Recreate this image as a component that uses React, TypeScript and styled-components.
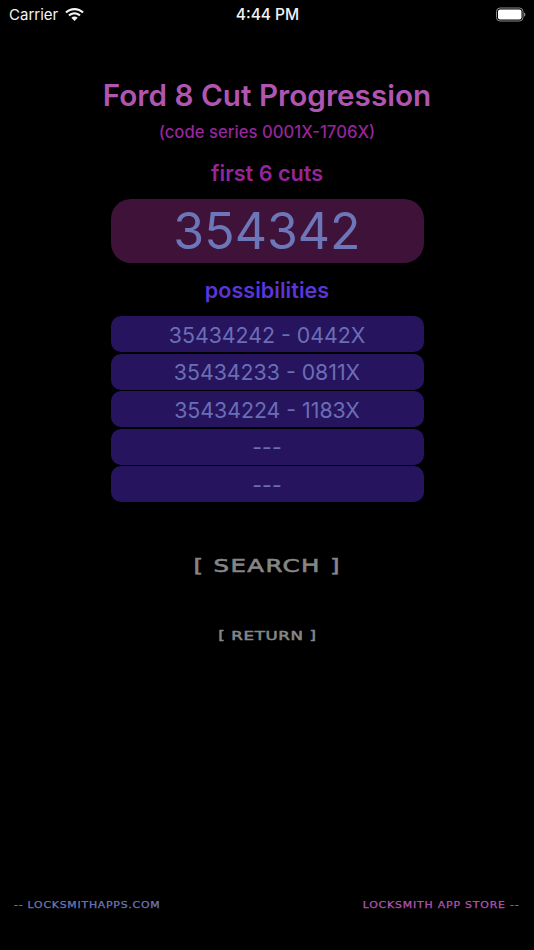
import React from 'react';
import styled, { createGlobalStyle } from 'styled-components';

const GlobalStyle = createGlobalStyle`
  html, body {
    margin: 0;
    padding: 0;
    background: #000;
  }
  body {
    font-family: Inter, "Liberation Sans", sans-serif;
  }
`;

const Screen = styled.div`
  width: 534px;
  height: 950px;
  background: #000;
  display: flex;
  flex-direction: column;
  overflow: hidden;
`;

const StatusBar = styled.div`
  height: 28px;
  display: grid;
  grid-template-columns: 1fr auto 1fr;
  align-items: center;
  padding: 0 8px 0 9px;
  color: #f4f4f4;
`;

const Carrier = styled.div`
  display: flex;
  align-items: center;
  gap: 7px;
  font-size: 15px;
  font-weight: 400;
`;

const Clock = styled.div`
  font-weight: 500;
  font-size: 15.500px;
`;

const BatteryWrap = styled.div`
  justify-self: end;
  display: flex;
`;

const Content = styled.div`
  flex: 1;
  display: flex;
  flex-direction: column;
  align-items: center;
  padding-top: 47px;
`;

const Title = styled.div`
  color: #b055b0;
  font-size: 29.700px;
  font-weight: 600;
  line-height: 40px;
`;

const Subtitle = styled.div`
  color: #96259a;
  font-size: 16.700px;
  font-weight: 500;
  line-height: 20px;
  margin-top: 7px;
`;

const SectionLabel = styled.div<{ $color: string }>`
  color: ${(props) => props.$color};
  font-size: 21.600px;
  font-weight: 600;
  line-height: 28px;
`;

const CutsLabel = styled(SectionLabel)`
  margin-top: 17px;
`;

const PossibilitiesLabel = styled(SectionLabel)`
  margin-top: 13px;
`;

const CutsBox = styled.div`
  width: 313px;
  height: 64px;
  margin-top: 12px;
  border-radius: 20px;
  background: #3e1239;
  color: #6d76b8;
  font-size: 50px;
  font-weight: 400;
  display: flex;
  align-items: center;
  justify-content: center;
`;

const RowList = styled.div`
  display: flex;
  flex-direction: column;
  gap: 1.500px;
  margin-top: 12px;
`;

const Row = styled.div`
  width: 313px;
  height: 36px;
  padding-top: 1px;
  box-sizing: border-box;
  border-radius: 10px;
  background: #26145f;
  color: #6a6eb6;
  font-size: 21.300px;
  font-weight: 400;
  display: flex;
  align-items: center;
  justify-content: center;
`;

const WideText = styled.div`
  font-family: "DejaVu Sans", sans-serif;
  font-weight: 400;
  white-space: nowrap;
`;

const WideButton = styled(WideText)<{ $size: number; $top: number; $stretch: number; $spacing: number }>`
  margin-top: ${(props) => props.$top}px;
  color: #868686;
  font-size: ${(props) => props.$size}px;
  letter-spacing: ${(props) => props.$spacing}px;
  line-height: 1.2;
  -webkit-text-stroke: 0.600px #868686;
  transform: scaleX(${(props) => props.$stretch});
`;

const Footer = styled.div`
  display: flex;
  justify-content: space-between;
  padding: 0 14px 38px;
`;

const FooterLink = styled(WideText)<{ $color: string; $origin: string; $spacing: number }>`
  color: ${(props) => props.$color};
  font-size: 8.500px;
  letter-spacing: ${(props) => props.$spacing}px;
  line-height: 14px;
  -webkit-text-stroke: 0.250px ${(props) => props.$color};
  transform: scaleX(1.28);
  transform-origin: ${(props) => props.$origin} center;
`;

const WifiIcon = () => (
  <svg width="19" height="15" viewBox="0.8 0.4 17.4 12.2">
    <path
      fill="#f4f4f4"
      d="M9.5 2.6c2.7 0 5.2 1 7.1 2.8l1.4-1.5C15.7 1.800 12.700.5 9.500.5S3.300 1.800 1 3.900l1.400 1.500C4.300 3.600 6.800 2.600 9.500 2.600zM9.500 6.500c1.600 0 3.100.6 4.300 1.700l1.400-1.500C13.700 5.300 11.700 4.400 9.500 4.400s-4.200.9-5.700 2.300l1.400 1.500C6.400 7.100 7.900 6.500 9.500 6.500zM9.500 8.300c-1.100 0-2.100.4-2.900 1.100l2.900 3.100 2.900-3.100C11.600 8.700 10.600 8.300 9.500 8.300z"
    />
  </svg>
);

const BatteryIcon = () => (
  <svg width="30" height="15" viewBox="0 0 30 15">
    <rect x="0.5" y="1" width="26.500" height="13" rx="3.500" fill="none" stroke="#8a8a8a" />
    <rect x="2" y="2.500" width="23.500" height="10" rx="2" fill="#fff" />
    <path d="M28 5.500v4c.8-.3 1.400-1.100 1.400-2S28.800 5.800 28 5.500z" fill="#8a8a8a" />
  </svg>
);

const rows = ['35434242 - 0442X', '35434233 - 0811X', '35434224 - 1183X', '---', '---'];

export default function App() {
  return (
    <>
      <GlobalStyle />
      <Screen>
        <StatusBar>
          <Carrier>
            Carrier
            <WifiIcon />
          </Carrier>
          <Clock>4:44 PM</Clock>
          <BatteryWrap>
            <BatteryIcon />
          </BatteryWrap>
        </StatusBar>
        <Content>
          <Title>Ford 8 Cut Progression</Title>
          <Subtitle>(code series 0001X-1706X)</Subtitle>
          <CutsLabel $color="#96259a">first 6 cuts</CutsLabel>
          <CutsBox>354342</CutsBox>
          <PossibilitiesLabel $color="#5a35d8">possibilities</PossibilitiesLabel>
          <RowList>
            {rows.map((row, i) => (
              <Row key={i}>{row}</Row>
            ))}
          </RowList>
          <WideButton $size={18} $top={53} $stretch={1.36} $spacing={1}>[ SEARCH ]</WideButton>
          <WideButton $size={13} $top={51} $stretch={1.28} $spacing={0.5}>[ RETURN ]</WideButton>
        </Content>
        <Footer>
          <FooterLink $color="#6d76b8" $origin="left" $spacing={0.6}>-- LOCKSMITHAPPS.COM</FooterLink>
          <FooterLink $color="#b055b0" $origin="right" $spacing={0.65}>LOCKSMITH APP STORE --</FooterLink>
        </Footer>
      </Screen>
    </>
  );
}
